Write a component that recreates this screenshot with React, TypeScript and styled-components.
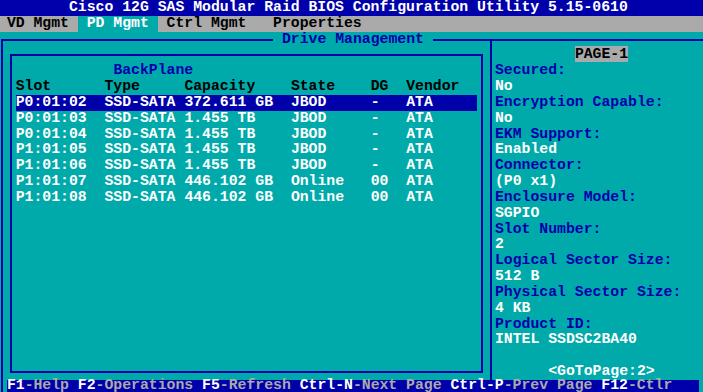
import styled, { createGlobalStyle } from "styled-components";

// text-mode cell size (80x25 screen, slightly cropped on the right/bottom)
const CW = 8.875;
const CH = 15.83;
const c = (n: number) => `${n * CW}px`;
const r = (n: number) => `${n * CH}px`;

const BLUE = "#0000aa";
const TEAL = "#00aaaa";
const GRAY = "#aaaaaa";
const WHITE = "#ffffff";
const BLACK = "#000000";

const drives = [
  ["P0:01:02", "SSD-SATA", "372.611 GB", "JBOD", "-", "ATA"],
  ["P0:01:03", "SSD-SATA", "1.455 TB", "JBOD", "-", "ATA"],
  ["P0:01:04", "SSD-SATA", "1.455 TB", "JBOD", "-", "ATA"],
  ["P1:01:05", "SSD-SATA", "1.455 TB", "JBOD", "-", "ATA"],
  ["P1:01:06", "SSD-SATA", "1.455 TB", "JBOD", "-", "ATA"],
  ["P1:01:07", "SSD-SATA", "446.102 GB", "Online", "00", "ATA"],
  ["P1:01:08", "SSD-SATA", "446.102 GB", "Online", "00", "ATA"],
];

const details = [
  ["Secured:", "No"],
  ["Encryption Capable:", "No"],
  ["EKM Support:", "Enabled"],
  ["Connector:", "(P0 x1)"],
  ["Enclosure Model:", "SGPIO"],
  ["Slot Number:", "2"],
  ["Logical Sector Size:", "512 B"],
  ["Physical Sector Size:", "4 KB"],
  ["Product ID:", "INTEL SSDSC2BA40"],
];

const shortcuts = [
  ["F1", "-Help"],
  ["F2", "-Operations"],
  ["F5", "-Refresh"],
  ["Ctrl-N", "-Next Page"],
  ["Ctrl-P", "-Prev Page"],
  ["F12", "-Ctlr"],
];

const App = () => {
  return (
    <Root>
      <GlobalStyle />
      <Screen>
        <TitleBar>Cisco 12G SAS Modular Raid BIOS Configuration Utility 5.15-0610</TitleBar>
        <MenuBar>
          <MenuItem>VD Mgmt</MenuItem>
          <MenuItem $active>PD Mgmt</MenuItem>
          <MenuItem>Ctrl Mgmt</MenuItem>
          <MenuItem $gap={1}>Properties</MenuItem>
        </MenuBar>
        <OuterFrame>
          <FrameTitle>Drive Management</FrameTitle>
          <Panes>
            <LeftPane>
              <InnerBox>
                <Line $tone={BLUE} $indent={11}>
                  BackPlane
                </Line>
                <TableRow $tone={BLACK}>
                  <span>Slot</span>
                  <span>Type</span>
                  <span>Capacity</span>
                  <span>State</span>
                  <span>DG</span>
                  <span>Vendor</span>
                </TableRow>
                {drives.map((d, i) => (
                  <TableRow key={d[0]} $tone={WHITE} $selected={i === 0}>
                    {d.map((cell, j) => (
                      <span key={j}>{cell}</span>
                    ))}
                  </TableRow>
                ))}
              </InnerBox>
            </LeftPane>
            <RightPane>
              <Line $indent={9}>
                <PageTag>PAGE-1</PageTag>
              </Line>
              {details.map(([label, value]) => (
                <div key={label}>
                  <Line $tone={BLUE}>{label}</Line>
                  <Line $tone={WHITE}>{value}</Line>
                </div>
              ))}
              <PageLink $indent={6} $tone={WHITE}>
                {"<GoToPage:2>"}
              </PageLink>
            </RightPane>
          </Panes>
          <StatusBar>
            {shortcuts.map(([key, desc], i) => (
              <span key={key}>
                {i > 0 && " "}
                <Key>{key}</Key>
                <Desc>{desc}</Desc>
              </span>
            ))}
          </StatusBar>
        </OuterFrame>
      </Screen>
    </Root>
  );
};

export default App;

const GlobalStyle = createGlobalStyle`
  html, body {
    margin: 0;
    padding: 0;
    background: ${TEAL};
  }
  body {
    font-family: "Liberation Mono", "DejaVu Sans Mono", monospace;
  }
`;

const Root = styled.div`
  width: 703px;
  height: 392px;
  overflow: hidden;
  background: ${TEAL};
  font-family: "Liberation Mono", "DejaVu Sans Mono", monospace;
  font-size: 14.79px;
  font-weight: bold;
  line-height: ${CH}px;
  white-space: pre;
`;

const Screen = styled.div`
  width: ${c(80)};
  margin-left: -2px;
  display: flex;
  flex-direction: column;
`;

const TitleBar = styled.div`
  height: ${r(1)};
  padding-left: ${c(8)};
  background: ${BLUE};
  color: ${WHITE};
`;

const MenuBar = styled.div`
  height: ${r(1)};
  display: flex;
  background: ${GRAY};
`;

const MenuItem = styled.div<{ $active?: boolean; $gap?: number }>`
  padding: 0 ${c(1)};
  margin-left: ${(p) => c(p.$gap ?? 0)};
  background: ${(p) => (p.$active ? TEAL : "transparent")};
  color: ${(p) => (p.$active ? WHITE : BLACK)};
`;

const OuterFrame = styled.div`
  position: relative;
  box-sizing: border-box;
  width: ${79 * CW + 2}px;
  margin-top: ${CH / 2 - 1}px;
  margin-left: ${CW / 2 - 1}px;
  border: 2px solid ${BLUE};
  border-bottom: none;
  display: flex;
  flex-direction: column;
`;

const FrameTitle = styled.div`
  position: absolute;
  top: ${-CH / 2 - 1}px;
  left: ${30.5 * CW - 1}px;
  height: ${r(1)};
  padding: 0 ${c(1)};
  background: ${TEAL};
  color: ${BLUE};
`;

const Panes = styled.div`
  height: ${21.5 * CH - 1}px;
  display: flex;
`;

const LeftPane = styled.div`
  width: ${55 * CW - 2}px;
  display: flex;
`;

const InnerBox = styled.div`
  flex: 1;
  margin: ${CH - 2}px ${CW - 2}px ${CH / 2 - 1}px ${CW - 2}px;
  padding: ${CH / 2 - 1}px 0 0 ${CW / 2 - 1}px;
  border: 2px solid ${BLUE};
`;

const RightPane = styled.div`
  flex: 1;
  display: flex;
  flex-direction: column;
  border-left: 2px solid ${BLUE};
  padding: ${CH / 2 - 1}px 0 0 ${CW / 2 - 1}px;
`;

const Line = styled.div<{ $tone?: string; $indent?: number }>`
  height: ${r(1)};
  padding-left: ${(p) => c(p.$indent ?? 0)};
  color: ${(p) => p.$tone ?? WHITE};
`;

const PageLink = styled(Line)`
  margin-top: auto;
`;

const PageTag = styled.span`
  background: ${GRAY};
  color: ${BLACK};
`;

const TableRow = styled.div<{ $tone?: string; $selected?: boolean }>`
  width: ${c(52)};
  height: ${r(1)};
  display: grid;
  grid-template-columns: ${c(10)} ${c(9)} ${c(12)} ${c(9)} ${c(4)} ${c(8)};
  background: ${(p) => (p.$selected ? BLUE : "transparent")};
  color: ${(p) => p.$tone ?? WHITE};
`;

const StatusBar = styled.div`
  width: ${c(78)};
  height: ${r(1)};
  margin-left: ${CW / 2 - 1}px;
  line-height: ${CH - 4}px;
  background: ${BLUE};
`;

const Key = styled.span`
  color: ${WHITE};
`;

const Desc = styled.span`
  color: ${GRAY};
`;
